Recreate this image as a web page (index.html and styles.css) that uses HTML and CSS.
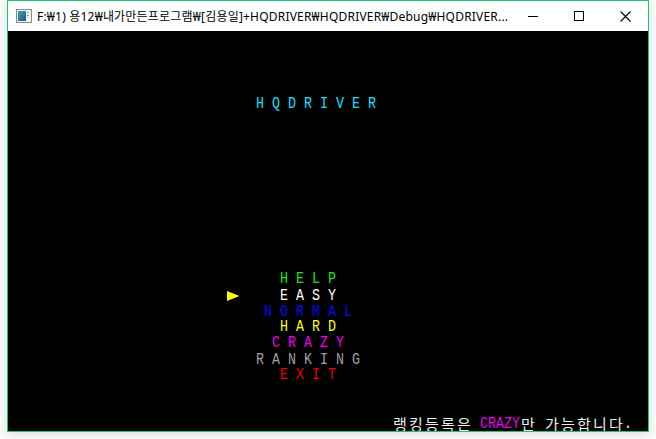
FILE: index.html
```html
<!DOCTYPE html>
<html lang="ko">
<head>
<meta charset="utf-8">
<title>HQDRIVER</title>
<link rel="stylesheet" href="styles.css">
</head>
<body>
<div class="window">
  <div class="titlebar">
    <svg class="icon" width="16" height="16" viewBox="0 0 16 16">
      <defs>
        <linearGradient id="g" x1="0" y1="0" x2="1" y2="1">
          <stop offset="0" stop-color="#3aa0b8"/>
          <stop offset="1" stop-color="#1d5a8a"/>
        </linearGradient>
      </defs>
      <rect x="0.5" y="1.5" width="15" height="13" fill="#f4f4f4" stroke="#8a8a8a"/>
      <rect x="2" y="3" width="8" height="10" fill="url(#g)"/>
      <rect x="11" y="4" width="2" height="1" fill="#9a9a9a"/>
      <rect x="11" y="7" width="2" height="1" fill="#9a9a9a"/>
    </svg>
    <span class="title">F:₩1) 용12₩내가만든프로그램₩[김용일]+HQDRIVER₩HQDRIVER₩Debug₩HQDRIVER...</span>
    <div class="controls">
      <div class="btn"><svg width="10" height="10" viewBox="0 0 10 10"><rect x="0" y="5" width="10" height="1" fill="#000"/></svg></div>
      <div class="btn"><svg width="10" height="10" viewBox="0 0 10 10"><rect x="0.5" y="0.5" width="9" height="9" fill="none" stroke="#000"/></svg></div>
      <div class="btn"><svg width="11" height="11" viewBox="0 0 11 11"><path d="M0.5 0.5 L10.5 10.5 M10.5 0.5 L0.5 10.5" stroke="#000" stroke-width="1.1"/></svg></div>
    </div>
  </div>
  <div class="console"><pre>




                               <span class="cyan">H Q D R I V E R</span>










                                  <span class="green">H E L P</span>
                           <svg class="arrow" width="16" height="12.3077" viewBox="0 0 16 16" preserveAspectRatio="none"><polygon points="3,2.5 15.5,7.5 3,12.5" fill="#ffff00"/></svg>     <span class="white">E A S Y</span>
                                <span class="blue">N O R M A L</span>
                                  <span class="yellow">H A R D</span>
                                 <span class="magenta">C R A Z Y</span>
                               <span class="gray">R A N K I N G</span>
                                  <span class="red">E X I T</span>


                                                <span class="note"><span class="k">랭</span><span class="k">킹</span><span class="k">등</span><span class="k">록</span><span class="k">은</span> <span class="magenta">CRAZY</span><span class="k">만</span> <span class="k">가</span><span class="k">능</span><span class="k">합</span><span class="k">니</span><span class="k">다</span>.</span></pre></div>
</div>
</body>
</html>
```
FILE: styles.css
```css
html, body {
  margin: 0;
  padding: 0;
}
body {
  background: #fbfbfb;
  width: 656px;
  height: 439px;
  overflow: hidden;
}
.window {
  margin-left: 7px;
  width: 640px;
  border: 1px solid #1fc46f;
  box-shadow: 0 2px 8px rgba(0, 0, 0, 0.12);
  background: #fff;
}
.titlebar {
  height: 30px;
  display: flex;
  align-items: center;
  background: #fff;
}
.icon {
  margin-left: 8px;
  flex: none;
}
.title {
  margin-left: 5px;
  font-family: "Noto Sans", "Noto Sans CJK KR", sans-serif;
  font-size: 12px;
  letter-spacing: 0.2px;
  color: #000;
  white-space: nowrap;
  overflow: hidden;
}
.controls {
  margin-left: auto;
  display: flex;
  flex: none;
}
.btn {
  width: 46px;
  height: 30px;
  display: flex;
  align-items: center;
  justify-content: center;
}
.console {
  background: #000;
  height: 400px;
  overflow: hidden;
}
/* console cells: 8px wide, 16px tall (drawn at 12.31px then stretched vertically) */
.console pre {
  margin: 0;
  padding-top: 0.5px;
  font-family: "Liberation Mono", monospace;
  font-size: 13.3333px;
  line-height: 12.3077px;
  letter-spacing: 0;
  color: #c0c0c0;
  white-space: pre;
  transform: scaleY(1.3);
  transform-origin: top left;
}
.arrow {
  display: inline-block;
  vertical-align: top;
}
.cyan { color: #18e0f6; }
.green { color: #1ee61e; }
.white { color: #ffffff; }
.blue { color: #0a0af0; }
.yellow { color: #ffff00; }
.magenta { color: #f000f0; }
.gray { color: #a0a0a0; }
.red { color: #f00000; }
.note { color: #eeeeee; }
.k {
  display: inline-block;
  width: 16px;
  height: 12.3077px;
  vertical-align: top;
  text-align: center;
  font-family: "Noto Sans CJK KR", sans-serif;
  font-size: 15px;
  line-height: 16px;
  transform: scaleY(0.76923);
  transform-origin: top left;
}
```
